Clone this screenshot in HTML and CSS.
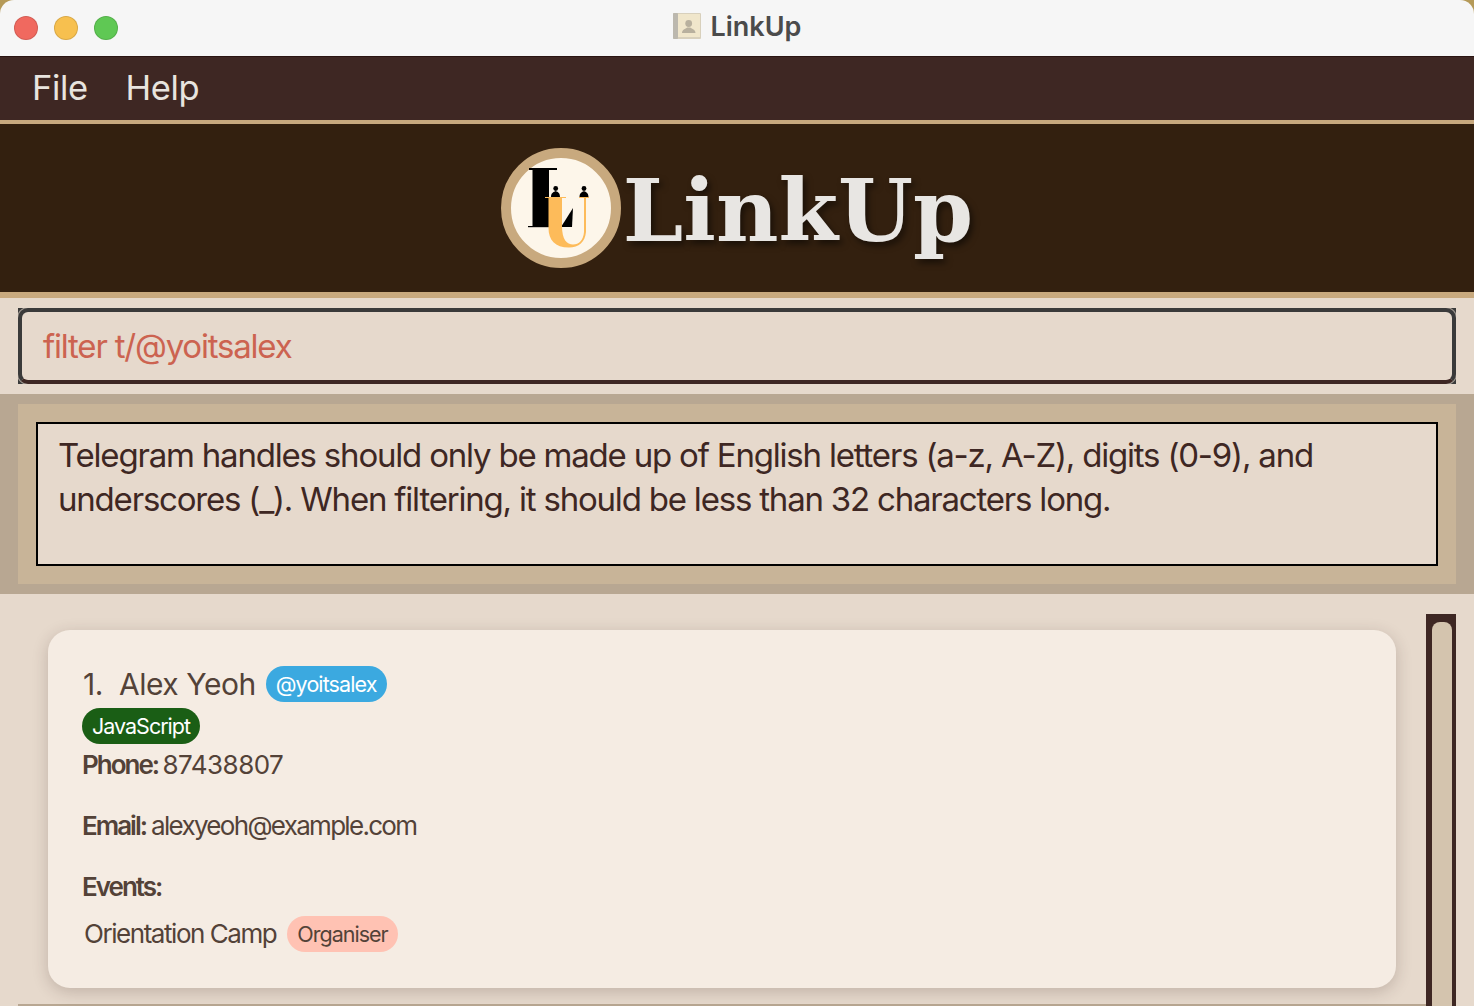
FILE: index.html
```html
<!DOCTYPE html>
<html lang="en">
<head>
    <meta charset="UTF-8">
    <meta name="viewport" content="width=device-width, initial-scale=1.0">
    <title>LinkUp</title>
    <link rel="stylesheet" href="styles.css">
</head>
<body>

    <!-- Window title bar -->
    <div class="titlebar-wrap">
        <div class="titlebar">
            <div class="traffic">
                <span class="light red"></span>
                <span class="light yellow"></span>
                <span class="light green"></span>
            </div>
            <div class="window-title">
                <svg class="book-icon" width="28" height="26" viewBox="0 0 28 26">
                    <rect x="0" y="0" width="28" height="26" rx="1" fill="#d8d0bc"/>
                    <rect x="0" y="0" width="5" height="26" rx="1" fill="#bcb8ae"/>
                    <rect x="5" y="1" width="22" height="23" fill="#f0e6cb"/>
                    <circle cx="15.700" cy="10.500" r="3.400" fill="#b8b09e"/>
                    <path d="M9 20 C9 16.500 12.500 16 14.200 14.500 L17.200 14.500 C19 16 22.500 16.500 22.500 20 Z" fill="#b8b09e"/>
                </svg>
                <span>LinkUp</span>
            </div>
        </div>
    </div>

    <div class="menubar">
        <span class="menu-item">File</span>
        <span class="menu-item">Help</span>
    </div>

    <!-- Logo banner -->
    <div class="banner">
        <svg class="logo" width="120" height="120" viewBox="0 0 120 120">
            <circle cx="60" cy="60" r="55" fill="#fdf6ea" stroke="#c8a97e" stroke-width="10"/>
            <g fill="#000">
                <rect x="28" y="20" width="28" height="2"/>
                <rect x="31.500" y="20" width="16.500" height="59"/>
                <rect x="27" y="78" width="34" height="1.200"/>
                <path d="M60 79 L72 60 L71 79 Z"/>
                <circle cx="54.700" cy="40.500" r="2.400"/>
                <path d="M50 49 C50 45 52.500 44 54.700 43 C57 44 59 45 59 49 Z"/>
                <circle cx="83" cy="40.500" r="2.400"/>
                <path d="M78.500 49 C78.500 45 81 44 83 43 C85 44 87.500 45 87.500 49 Z"/>
            </g>
            <g fill="#fdbb5a">
                <rect x="44" y="49" width="21" height="1"/>
                <rect x="78" y="49" width="10" height="1"/>
                <path d="M47.500 49 L61 49 L61 78 C61 92 66 96.500 72 96.500 C78 96.500 82.500 92 83 84 L83 49 L85 49 L85 84 C84 94 78 99.500 68 99.500 C54 99.500 47.500 92 47.500 80 Z"/>
            </g>
        </svg>
        <span class="brand">LinkUp</span>
    </div>

    <!-- Command box -->
    <div class="command-area">
        <div class="command-box">
            <div class="command-input">filter t/@yoitsalex</div>
        </div>
    </div>

    <!-- Result display -->
    <div class="result-area">
        <div class="result-inner">
            <div class="result-box">Telegram handles should only be made up of English letters (a-z, A-Z), digits (0-9), and underscores (_). When filtering, it should be less than 32 characters long.</div>
        </div>
    </div>

    <!-- Person list -->
    <div class="list-area">
        <div class="list-panel">
            <div class="card">
                <div class="name-row">
                    <span class="name">1.&nbsp; Alex Yeoh</span>
                    <span class="pill pill-telegram">@yoitsalex</span>
                </div>
                <div class="tag-row">
                    <span class="pill pill-tag">JavaScript</span>
                </div>
                <p class="field field-phone"><b>Phone:</b> 87438807</p>
                <p class="field field-email"><b>Email:</b> alexyeoh@example.com</p>
                <p class="field field-events"><b>Events:</b></p>
                <div class="event-row">
                    <span class="event-name">Orientation Camp</span>
                    <span class="pill pill-role">Organiser</span>
                </div>
            </div>
        </div>
        <div class="scrollbar">
            <div class="thumb"></div>
        </div>
    </div>

</body>
</html>
```

FILE: styles.css
```css
* {
    margin: 0;
    padding: 0;
    box-sizing: border-box;
}

html, body {
    height: 1006px;
    overflow: hidden;
}

body {
    font-family: 'Inter', 'Liberation Sans', sans-serif;
    background: #e6d9cc;
    color: #3e2723;
}

/* Title bar */
.titlebar-wrap {
    background: #b59a58;
}

.titlebar {
    height: 57px;
    background: #f6f6f6;
    border-bottom: 1px solid #2a1512;
    border-radius: 14px 14px 0 0;
    display: flex;
    align-items: center;
    justify-content: center;
    position: relative;
}

.traffic {
    position: absolute;
    left: 14px;
    top: 16px;
    display: flex;
    gap: 16px;
}

.light {
    width: 24px;
    height: 24px;
    border-radius: 50%;
    border: 1px solid rgba(0, 0, 0, 0.12);
}

.red { background: #f0695f; }
.yellow { background: #f7c04f; }
.green { background: #5fc854; }

.window-title {
    display: flex;
    align-items: center;
    gap: 10px;
    font-size: 27px;
    font-weight: 600;
    color: #4b4b4b;
    margin-top: -4px;
}

/* Menu */
.menubar {
    height: 63px;
    background: #3e2723;
    display: flex;
    align-items: center;
    padding: 0 0 2px 32px;
    gap: 38px;
}

.menu-item {
    font-size: 34.5px;
    color: #e8e4df;
    letter-spacing: -0.4px;
}

/* Banner */
.banner {
    height: 178px;
    background: #33200f;
    border-top: 4px solid #c8a97e;
    border-bottom: 6px solid #c8a97e;
    display: flex;
    align-items: center;
    justify-content: center;
    gap: 2px;
}

.brand {
    font-family: 'DejaVu Serif', serif;
    font-size: 86px;
    font-weight: bold;
    color: #e8e6e3;
    text-shadow: 3px 4px 6px rgba(0, 0, 0, 0.5);
    margin-top: 5px;
}

/* Command */
.command-area {
    height: 96px;
    padding: 10px 18px 10px;
}

.command-box {
    height: 76px;
    background: #3a3a3a;
    overflow: hidden;
}

.command-input {
    height: 76px;
    background: #e6d9cc;
    border: 4px solid #3a3a3a;
    border-bottom-color: #3e2723;
    border-radius: 10px;
    box-shadow: 0 0 0 1px rgba(230, 217, 204, 0.6);
    padding-left: 21px;
    display: flex;
    align-items: center;
    font-size: 33px;
    letter-spacing: -1.2px;
    color: #cc6350;
}

/* Result */
.result-area {
    height: 200px;
    background: #b8a792;
    padding: 10px 18px;
}

.result-inner {
    height: 180px;
    background: #c8b498;
    padding: 18px;
}

.result-box {
    height: 144px;
    background: #e6d9cc;
    border: 2px solid #000;
    padding: 9px 20px;
    font-size: 33px;
    line-height: 44px;
    letter-spacing: -1.2px;
    color: #3e2723;
}

/* List */
.list-area {
    height: 412px;
    display: flex;
    padding: 20px 18px 0;
    position: relative;
}

.list-panel {
    width: 1408px;
    height: 392px;
    border-bottom: 2px solid #b8a792;
    padding: 16px 30px 0;
}

.card {
    height: 358px;
    background: #f5ece3;
    border-radius: 22px;
    box-shadow: 0 4px 16px rgba(62, 39, 35, 0.22);
    padding: 36px 35px 0;
    color: #534238;
}

.name-row {
    display: flex;
    align-items: center;
    gap: 10px;
    height: 36px;
}

.name {
    font-size: 30px;
    letter-spacing: -0.45px;
}

.pill {
    display: inline-flex;
    align-items: center;
    height: 36px;
    border-radius: 18px;
    font-size: 21.5px;
    letter-spacing: -0.9px;
    padding: 0 10px;
}

.pill-telegram {
    background: #3ba9e0;
    color: #fff;
}

.pill-tag {
    background: #1a5e15;
    color: #fff;
    letter-spacing: -1px;
}

.pill-role {
    background: #ffc2b3;
    color: #534238;
    letter-spacing: -1px;
}

.tag-row {
    margin-top: 6px;
    margin-left: -1px;
    height: 36px;
}

.field {
    font-size: 26px;
    line-height: 32px;
    letter-spacing: -0.5px;
    word-spacing: -2.5px;
    margin-left: -1px;
}

.field b {
    font-weight: 600;
    letter-spacing: -2px;
}

.field-phone { margin-top: 5px; }
.field-email { margin-top: 29px; letter-spacing: -1.7px; word-spacing: -0.5px; }
.field-events { margin-top: 29px; }

.event-row {
    margin-top: 13px;
    margin-left: 1px;
    display: flex;
    align-items: center;
    gap: 11px;
}

.event-name {
    font-size: 26px;
    letter-spacing: -1.45px;
    margin-bottom: 2px;
}

/* Scrollbar */
.scrollbar {
    width: 30px;
    height: 392px;
    background: #3e2723;
    padding: 8px 4px 0 6px;
}

.thumb {
    height: 400px;
    background: #d4c4ae;
    border-radius: 8px 8px 0 0;
}
```
